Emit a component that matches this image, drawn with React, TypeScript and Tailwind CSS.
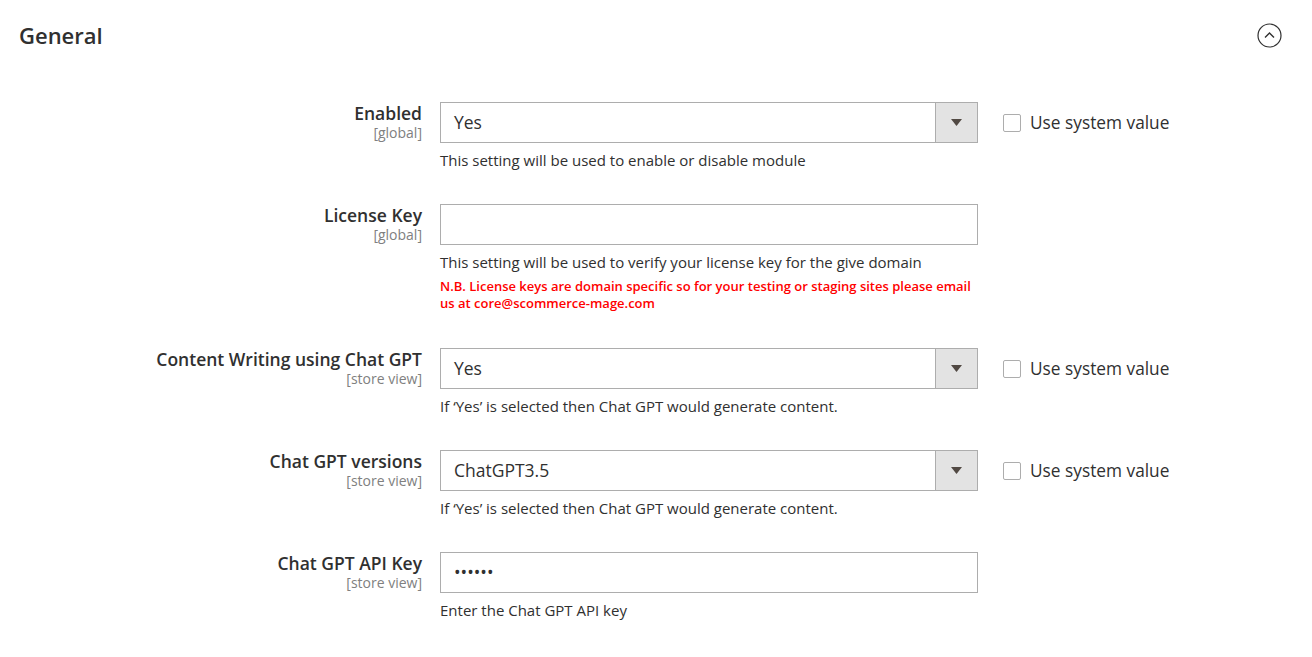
import React from 'react';

type Row = {
  label: string;
  scope: string;
  type: 'select' | 'text' | 'password';
  value: string;
  comment: string;
  note?: string;
  system?: boolean;
};

const rows: Row[] = [
  { label: 'Enabled', scope: '[global]', type: 'select', value: 'Yes', comment: 'This setting will be used to enable or disable module', system: true },
  {
    label: 'License Key',
    scope: '[global]',
    type: 'text',
    value: '',
    comment: 'This setting will be used to verify your license key for the give domain',
    note: 'N.B. License keys are domain specific so for your testing or staging sites please email us at core@scommerce-mage.com',
  },
  { label: 'Content Writing using Chat GPT', scope: '[store view]', type: 'select', value: 'Yes', comment: 'If \u2018Yes\u2019 is selected then Chat GPT would generate content.', system: true },
  { label: 'Chat GPT versions', scope: '[store view]', type: 'select', value: 'ChatGPT3.5', comment: 'If \u2018Yes\u2019 is selected then Chat GPT would generate content.', system: true },
  { label: 'Chat GPT API Key', scope: '[store view]', type: 'password', value: '\u2022\u2022\u2022\u2022\u2022\u2022', comment: 'Enter the Chat GPT API key' },
];

const Field: React.FC<{ row: Row }> = ({ row }) => (
  <div className="flex items-start">
    <div className="w-[422px] shrink-0 text-right">
      <div className="text-[17.5px] leading-[22px] font-semibold text-[#303030]">{row.label}</div>
      <div className="text-[14px] leading-[17px] text-[#808080]">{row.scope}</div>
    </div>
    <div className="ml-[18px] w-[538px] shrink-0">
      <div className="h-[41px] border border-[#adadad] bg-white flex items-center">
        <span className="flex-1 pl-[13px] text-[17.5px] text-[#303030]">{row.value}</span>
        {row.type === 'select' && (
          <span className="w-[42px] h-full bg-[#e3e3e3] border-l border-[#adadad] flex items-center justify-center">
            <svg width="11" height="7" viewBox="0 0 11 7">
              <path d="M0 0h11L5.5 7z" fill="#514943" />
            </svg>
          </span>
        )}
      </div>
      <div className="mt-[7px] text-[15px] leading-[20px] text-[#303030]">{row.comment}</div>
      {row.note && (
        <div className="mt-[6px] mb-[2px] text-[13px] leading-[17px] font-semibold text-[#ff0000] pr-[4px]">{row.note}</div>
      )}
    </div>
    {row.system && (
      <label className="ml-[25px] mt-[12px] flex items-center">
        <span className="w-[18px] h-[18px] border border-[#adadad] rounded-[2px] bg-white" />
        <span className="ml-[9px] text-[17.3px] leading-[18px] text-[#303030]">Use system value</span>
      </label>
    )}
  </div>
);

export default function App() {
  return (
    <div className="w-[1312px] h-[657px] bg-white font-['Open_Sans',sans-serif] overflow-hidden">
      <div className="flex items-center justify-between pl-[19px] pr-[30px] pt-[21px]">
        <h2 className="text-[22px] leading-[28px] font-semibold text-[#303030]">General</h2>
        <svg width="25" height="25" viewBox="0 0 25 25" fill="none">
          <circle cx="12.5" cy="12.5" r="11.5" stroke="#303030" strokeWidth="1.2" />
          <path d="M8 14.5l4.5-4.5 4.5 4.5" stroke="#303030" strokeWidth="1.4" />
        </svg>
      </div>
      <div className="mt-[53px] flex flex-col gap-[34px]">
        {rows.map((r) => (
          <Field key={r.label} row={r} />
        ))}
      </div>
    </div>
  );
}
